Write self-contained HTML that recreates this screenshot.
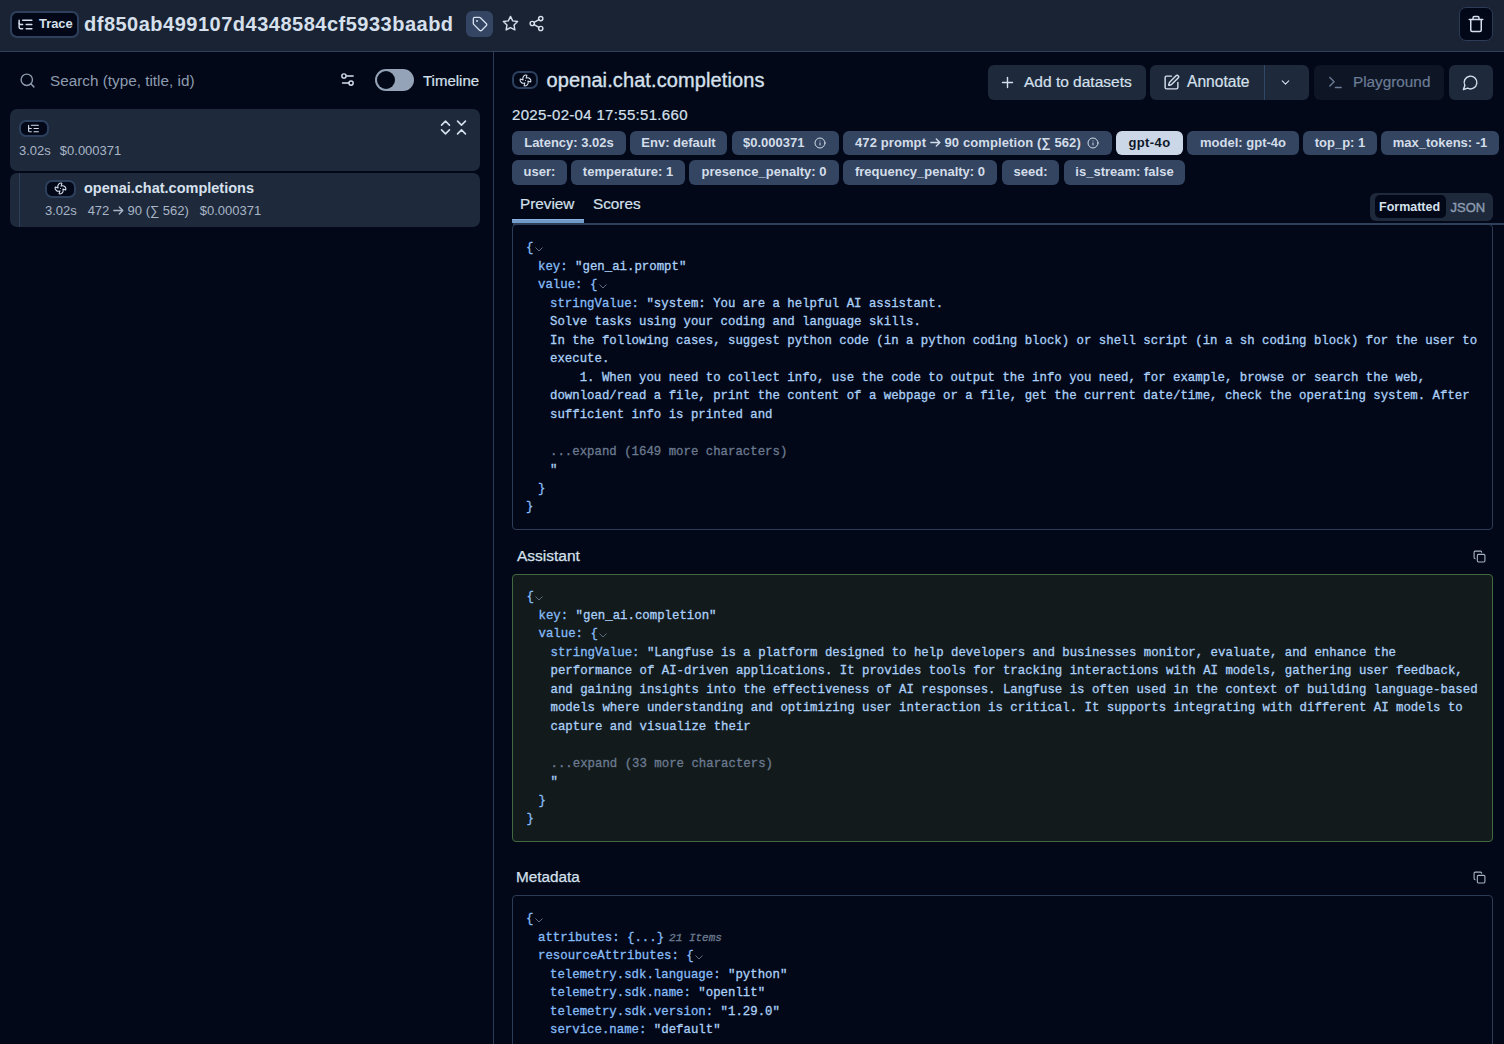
<!DOCTYPE html>
<html><head><meta charset="utf-8">
<style>
*{box-sizing:border-box;margin:0;padding:0}
html,body{width:1504px;height:1044px;overflow:hidden;background:#020817;font-family:"Liberation Sans",sans-serif;color:#d6e0ed}
.abs{position:absolute}
svg{display:block}
.ic{fill:none;stroke:currentColor;stroke-width:2;stroke-linecap:round;stroke-linejoin:round}
#hdr{position:absolute;left:0;top:0;width:1504px;height:52px;background:#1a2334;border-bottom:1px solid #2f3f5b}
#left{position:absolute;left:0;top:52px;width:494px;height:992px;border-right:1px solid #2c3c56}
.card{position:absolute;background:#1e293b;border-radius:7px}
.badge{position:absolute;background:#020817;border:2px solid #2c405e;border-radius:7px}
.tag{position:absolute;height:24px;background:#334561;border-radius:6px;font-weight:bold;font-size:13px;line-height:24px;color:#d3dde9;text-align:center;white-space:nowrap}
.r2{top:160px;height:25px;line-height:23.5px}
.btn{position:absolute;height:35px;top:65px;background:#1e293b;border-radius:6px;color:#d6e0ed;font-size:15px}
.mono{font-family:"Liberation Mono",monospace;font-size:12.37px;line-height:18.5px;white-space:pre;color:#abd0f7;-webkit-text-stroke:0.3px currentColor}
.k{color:#86bcf7}
.g{color:#6b7a90}
.chev{display:inline-block;margin-left:1.5px;vertical-align:baseline;position:relative;top:1px;-webkit-text-stroke:0}
.arr{display:inline-block;vertical-align:baseline;position:relative;top:0px}
.items{font-style:italic;font-size:11px;color:#6b7a90;margin-left:5px}
.box{position:absolute;left:512px;width:981px;border:1px solid #2c3c56;border-radius:4px}
.sect{position:absolute;left:516px;font-size:15.3px;color:#d6e0ed;-webkit-text-stroke:0.25px currentColor}
.med{-webkit-text-stroke:0.2px currentColor}
</style></head><body>

<div id="hdr">
  <div class="abs" style="left:10px;top:11px;width:69px;height:27px;background:#020817;border:2px solid #2f405c;border-radius:7px"></div>
  <svg class="abs ic" style="left:17px;top:16px;color:#d6e0ed" width="17" height="17" viewBox="0 0 24 24"><path d="M21 12h-8"/><path d="M21 6H8"/><path d="M21 18h-8"/><path d="M3 6v4c0 1.1.9 2 2 2h3"/><path d="M3 10v6c0 1.1.9 2 2 2h3"/></svg>
  <div class="abs" style="left:39px;top:16px;font-size:12.9px;font-weight:bold;line-height:16px">Trace</div>
  <div class="abs" style="left:84px;top:12px;font-size:20px;font-weight:bold;line-height:24px;letter-spacing:0.5px">df850ab499107d4348584cf5933baabd</div>
  <div class="abs" style="left:466px;top:11px;width:27px;height:26px;background:#334563;border-radius:6px"></div>
  <svg class="abs ic" style="left:472px;top:16px" width="16" height="16" viewBox="0 0 24 24" stroke-width="2"><path d="M12.586 2.586A2 2 0 0 0 11.172 2H4a2 2 0 0 0-2 2v7.172a2 2 0 0 0 .586 1.414l8.704 8.704a2.426 2.426 0 0 0 3.42 0l6.58-6.58a2.426 2.426 0 0 0 0-3.42z"/><circle cx="7.5" cy="7.5" r=".5" fill="currentColor"/></svg>
  <svg class="abs ic" style="left:502px;top:15px" width="17" height="17" viewBox="0 0 24 24"><polygon points="12 2 15.09 8.26 22 9.27 17 14.14 18.18 21.02 12 17.77 5.82 21.02 7 14.14 2 9.27 8.91 8.26 12 2"/></svg>
  <svg class="abs ic" style="left:528px;top:15px" width="17" height="17" viewBox="0 0 24 24"><circle cx="18" cy="5" r="3"/><circle cx="6" cy="12" r="3"/><circle cx="18" cy="19" r="3"/><line x1="8.59" y1="13.51" x2="15.42" y2="17.49"/><line x1="15.41" y1="6.51" x2="8.59" y2="10.49"/></svg>
  <div class="abs" style="left:1459px;top:7px;width:34px;height:34px;background:#020817;border:1px solid #2c3c56;border-radius:7px"></div>
  <svg class="abs ic" style="left:1467px;top:15px" width="18" height="18" viewBox="0 0 24 24"><path d="M3 6h18"/><path d="M19 6v14c0 1-1 2-2 2H7c-1 0-2-1-2-2V6"/><path d="M8 6V4c0-1 1-2 2-2h4c1 0 2 1 2 2v2"/></svg>
</div>

<div id="left">
  <svg class="abs ic" style="left:18.5px;top:19.5px;color:#8d9bb0" width="17" height="17" viewBox="0 0 24 24"><circle cx="11" cy="11" r="8"/><path d="m21 21-4.3-4.3"/></svg>
  <div class="abs" style="left:50px;top:20px;font-size:15.3px;line-height:18px;color:#8d9bb0">Search (type, title, id)</div>
  <svg class="abs ic" style="left:339px;top:19px;color:#d6e0ed" width="17" height="17" viewBox="0 0 24 24"><path d="M20 7h-9"/><path d="M14 17H5"/><circle cx="17" cy="17" r="3"/><circle cx="7" cy="7" r="3"/></svg>
  <div class="abs" style="left:375px;top:17px;width:39px;height:22px;background:#94a3b8;border-radius:11px"></div>
  <div class="abs" style="left:377px;top:19px;width:18px;height:18px;background:#020817;border-radius:9px"></div>
  <div class="abs med" style="left:423px;top:19.5px;font-size:15px;line-height:18px">Timeline</div>

  <div class="card" style="left:10px;top:57px;width:470px;height:62px"></div>
  <div class="badge" style="left:19px;top:68px;width:30px;height:17px"></div>
  <svg class="abs ic" style="left:27px;top:70px" width="13" height="13" viewBox="0 0 24 24"><path d="M21 12h-8"/><path d="M21 6H8"/><path d="M21 18h-8"/><path d="M3 6v4c0 1.1.9 2 2 2h3"/><path d="M3 10v6c0 1.1.9 2 2 2h3"/></svg>
  <svg class="abs ic" style="left:435.5px;top:65.5px" width="19" height="19" viewBox="0 0 24 24" stroke-width="1.7"><path d="m7 15 5 5 5-5"/><path d="m7 9 5-5 5 5"/></svg>
  <svg class="abs ic" style="left:452.3px;top:65.5px" width="19" height="19" viewBox="0 0 24 24" stroke-width="1.7"><path d="m7 20 5-5 5 5"/><path d="m7 4 5 5 5-5"/></svg>
  <div class="abs" style="left:19px;top:91px;font-size:13px;line-height:16px;color:#a9b6c7;white-space:pre">3.02s<span style="margin-left:9px">$0.000371</span></div>

  <div class="card" style="left:10px;top:121px;width:470px;height:54px"></div>
  <div class="abs" style="left:18.5px;top:121px;width:1.5px;height:54px;background:#2c405e"></div>
  <div class="badge" style="left:45px;top:128px;width:31px;height:18px"></div>
  <svg class="abs ic" style="left:54px;top:130px" width="13" height="13" viewBox="0 0 24 24"><path d="M10.827 16.379a6.082 6.082 0 0 1-8.618-7.002l5.412 1.45a6.082 6.082 0 0 1 7.002-8.618l-1.45 5.412a6.082 6.082 0 0 1 8.618 7.002l-5.412-1.45a6.082 6.082 0 0 1-7.002 8.618l1.45-5.412Z"/><path d="M12 12v.01"/></svg>
  <div class="abs" style="left:84px;top:127px;font-size:14.5px;font-weight:bold;line-height:18px">openai.chat.completions</div>
  <div class="abs" style="left:45px;top:150.5px;font-size:13px;line-height:16px;color:#a9b6c7;white-space:pre">3.02s   472 <svg class="arr" width="11" height="9" viewBox="0 0 11 9"><path d="M0.8 4.5h9M6.3 1l3.5 3.5-3.5 3.5" fill="none" stroke="currentColor" stroke-width="1.4" stroke-linecap="round" stroke-linejoin="round"/></svg> 90 (∑ 562)   $0.000371</div>
</div>

<div id="right">
  <div class="badge" style="left:512px;top:71px;width:26px;height:18px"></div>
  <svg class="abs ic" style="left:519px;top:74px" width="13" height="13" viewBox="0 0 24 24"><path d="M10.827 16.379a6.082 6.082 0 0 1-8.618-7.002l5.412 1.45a6.082 6.082 0 0 1 7.002-8.618l-1.45 5.412a6.082 6.082 0 0 1 8.618 7.002l-5.412-1.45a6.082 6.082 0 0 1-7.002 8.618l1.45-5.412Z"/><path d="M12 12v.01"/></svg>
  <div class="abs" style="left:546.5px;top:68px;font-size:20px;line-height:24px;letter-spacing:0.1px;-webkit-text-stroke:0.35px currentColor">openai.chat.completions</div>
  <div class="abs med" style="left:512px;top:105.8px;font-size:15px;line-height:18px;letter-spacing:0.32px">2025-02-04 17:55:51.660</div>

  <div class="btn" style="left:988px;width:158px"></div>
  <svg class="abs ic" style="left:999px;top:74px" width="17" height="17" viewBox="0 0 24 24"><path d="M5 12h14"/><path d="M12 5v14"/></svg>
  <div class="abs med" style="left:1024px;top:73px;font-size:15.5px;line-height:18px">Add to datasets</div>
  <div class="btn" style="left:1150px;width:159px"></div>
  <div class="abs" style="left:1263.5px;top:65px;width:1.5px;height:35px;background:#304866"></div>
  <svg class="abs ic" style="left:1163px;top:74px" width="17" height="17" viewBox="0 0 24 24"><path d="M12 3H5a2 2 0 0 0-2 2v14a2 2 0 0 0 2 2h14a2 2 0 0 0 2-2v-7"/><path d="M18.375 2.625a1 1 0 0 1 3 3l-9.013 9.014a2 2 0 0 1-.853.505l-2.873.84a.5.5 0 0 1-.62-.62l.84-2.873a2 2 0 0 1 .506-.852z"/></svg>
  <div class="abs med" style="left:1187px;top:73px;font-size:15.6px;line-height:18px">Annotate</div>
  <svg class="abs ic" style="left:1279px;top:76px" width="13" height="13" viewBox="0 0 24 24"><path d="m6 9 6 6 6-6"/></svg>
  <div class="btn" style="left:1314px;width:130px;background:#0e1525"></div>
  <svg class="abs ic" style="left:1326.5px;top:73.5px;color:#6b7c95" width="17" height="17" viewBox="0 0 24 24"><polyline points="4 17 10 11 4 5"/><line x1="12" y1="19" x2="20" y2="19"/></svg>
  <div class="abs med" style="left:1353px;top:73px;font-size:15.3px;line-height:18px;color:#6b7c95">Playground</div>
  <div class="btn" style="left:1449px;width:44px"></div>
  <svg class="abs ic" style="left:1462px;top:74px" width="17" height="17" viewBox="0 0 24 24"><path d="M7.9 20A9 9 0 1 0 4 16.1L2 22Z"/></svg>

  <div class="tag" style="left:512px;top:131px;width:114px">Latency: 3.02s</div>
  <div class="tag" style="left:630px;top:131px;width:97px">Env: default</div>
  <div class="tag" style="left:732px;top:131px;width:107px;text-align:left;padding-left:11px">$0.000371</div>
  <svg class="abs ic" style="left:814px;top:137px;color:#d3dde9" width="12" height="12" viewBox="0 0 24 24"><circle cx="12" cy="12" r="10"/><path d="M12 16v-4"/><path d="M12 8h.01"/></svg>
  <div class="tag" style="left:843px;top:131px;width:269px;text-align:left;padding-left:12px;letter-spacing:0.1px">472 prompt <svg class="arr" width="11" height="9" viewBox="0 0 11 9"><path d="M0.8 4.5h9M6.3 1l3.5 3.5-3.5 3.5" fill="none" stroke="currentColor" stroke-width="1.4" stroke-linecap="round" stroke-linejoin="round"/></svg> 90 completion (∑ 562)</div>
  <svg class="abs ic" style="left:1087px;top:137px;color:#d3dde9" width="12" height="12" viewBox="0 0 24 24"><circle cx="12" cy="12" r="10"/><path d="M12 16v-4"/><path d="M12 8h.01"/></svg>
  <div class="tag" style="left:1116px;top:131px;width:67px;background:#cbd7e7;color:#0f172a;letter-spacing:0.4px">gpt-4o</div>
  <div class="tag" style="left:1187px;top:131px;width:112px">model: gpt-4o</div>
  <div class="tag" style="left:1303px;top:131px;width:74px">top_p: 1</div>
  <div class="tag" style="left:1381px;top:131px;width:118px">max_tokens: -1</div>

  <div class="tag r2" style="left:512px;width:55px">user:</div>
  <div class="tag r2" style="left:571px;width:114px">temperature: 1</div>
  <div class="tag r2" style="left:689px;width:150px">presence_penalty: 0</div>
  <div class="tag r2" style="left:843px;width:154px">frequency_penalty: 0</div>
  <div class="tag r2" style="left:1002px;width:57px">seed:</div>
  <div class="tag r2" style="left:1064px;width:121px">is_stream: false</div>

  <div class="abs med" style="left:520px;top:195px;font-size:15.3px;line-height:18px">Preview</div>
  <div class="abs med" style="left:593px;top:195px;font-size:15.3px;line-height:18px">Scores</div>
  
  <div class="abs" style="left:1370px;top:193px;width:123px;height:28px;background:#1e293b;border-radius:6px"></div>
  <div class="abs" style="left:1375px;top:195px;width:71px;height:23px;background:#020817;border-radius:5px"></div>
  <div class="abs" style="left:1379px;top:200px;font-size:12.5px;font-weight:bold;line-height:15px">Formatted</div>
  <div class="abs" style="left:1450.5px;top:199.5px;font-size:13px;line-height:15px;color:#8d9bb0;-webkit-text-stroke:0.4px currentColor">JSON</div>

  <div class="box" style="top:224px;height:306px"></div>
<div class="abs" style="left:513px;top:223px;width:991px;height:2px;background:#2f3f5a"></div>
<div class="abs" style="left:512px;top:219px;width:72px;height:4px;background:#739bc7;border-top:1px solid #8ab3e3"></div>
<div class="abs mono" style="left:526px;top:239px;width:965px"><div style="padding-left:0px"><span class="k">{</span><svg class="chev" width="8" height="5" viewBox="0 0 8 5"><polyline points="0.5,0.5 4,4 7.5,0.5" fill="none" stroke="#5d6b80" stroke-width="1"/></svg></div><div style="padding-left:12px"><span class="k">key:</span> "gen_ai.prompt"</div><div style="padding-left:12px"><span class="k">value: {</span><svg class="chev" width="8" height="5" viewBox="0 0 8 5"><polyline points="0.5,0.5 4,4 7.5,0.5" fill="none" stroke="#5d6b80" stroke-width="1"/></svg></div><div style="padding-left:24px"><span class="k">stringValue:</span> "system: You are a helpful AI assistant.</div><div style="padding-left:24px">Solve tasks using your coding and language skills.</div><div style="padding-left:24px">In the following cases, suggest python code (in a python coding block) or shell script (in a sh coding block) for the user to</div><div style="padding-left:24px">execute.</div><div style="padding-left:24px">    1. When you need to collect info, use the code to output the info you need, for example, browse or search the web,</div><div style="padding-left:24px">download/read a file, print the content of a webpage or a file, get the current date/time, check the operating system. After</div><div style="padding-left:24px">sufficient info is printed and</div><div style="padding-left:24px"> </div><div style="padding-left:24px"><span class="g">...expand (1649 more characters)</span></div><div style="padding-left:24px">"</div><div style="padding-left:12px"><span class="k">}</span></div><div style="padding-left:0px"><span class="k">}</span></div></div>
<div class="sect" style="top:547px;left:517px;font-size:15.5px">Assistant</div>
<svg class="abs ic" style="left:1473px;top:550px;color:#a9b6c7" width="13" height="13" viewBox="0 0 24 24"><rect width="14" height="14" x="8" y="8" rx="2" ry="2"/><path d="M4 16c-1.1 0-2-.9-2-2V4c0-1.1.9-2 2-2h10c1.1 0 2 .9 2 2"/></svg>
<div class="box" style="top:574px;height:268px;background:#131a1c;border-color:#426a40"></div>
<div class="abs mono" style="left:526.5px;top:588.2px;width:965px"><div style="padding-left:0px"><span class="k">{</span><svg class="chev" width="8" height="5" viewBox="0 0 8 5"><polyline points="0.5,0.5 4,4 7.5,0.5" fill="none" stroke="#5d6b80" stroke-width="1"/></svg></div><div style="padding-left:12px"><span class="k">key:</span> "gen_ai.completion"</div><div style="padding-left:12px"><span class="k">value: {</span><svg class="chev" width="8" height="5" viewBox="0 0 8 5"><polyline points="0.5,0.5 4,4 7.5,0.5" fill="none" stroke="#5d6b80" stroke-width="1"/></svg></div><div style="padding-left:24px"><span class="k">stringValue:</span> "Langfuse is a platform designed to help developers and businesses monitor, evaluate, and enhance the</div><div style="padding-left:24px">performance of AI-driven applications. It provides tools for tracking interactions with AI models, gathering user feedback,</div><div style="padding-left:24px">and gaining insights into the effectiveness of AI responses. Langfuse is often used in the context of building language-based</div><div style="padding-left:24px">models where understanding and optimizing user interaction is critical. It supports integrating with different AI models to</div><div style="padding-left:24px">capture and visualize their</div><div style="padding-left:24px"> </div><div style="padding-left:24px"><span class="g">...expand (33 more characters)</span></div><div style="padding-left:24px">"</div><div style="padding-left:12px"><span class="k">}</span></div><div style="padding-left:0px"><span class="k">}</span></div></div>
<div class="sect" style="top:868px">Metadata</div>
<svg class="abs ic" style="left:1473px;top:871px;color:#a9b6c7" width="13" height="13" viewBox="0 0 24 24"><rect width="14" height="14" x="8" y="8" rx="2" ry="2"/><path d="M4 16c-1.1 0-2-.9-2-2V4c0-1.1.9-2 2-2h10c1.1 0 2 .9 2 2"/></svg>
<div class="box" style="top:895px;height:200px"></div>
<div class="abs mono" style="left:526px;top:910px;width:965px"><div style="padding-left:0px"><span class="k">{</span><svg class="chev" width="8" height="5" viewBox="0 0 8 5"><polyline points="0.5,0.5 4,4 7.5,0.5" fill="none" stroke="#5d6b80" stroke-width="1"/></svg></div><div style="padding-left:12px"><span class="k">attributes: {...}</span><span class="items">21 Items</span></div><div style="padding-left:12px"><span class="k">resourceAttributes: {</span><svg class="chev" width="8" height="5" viewBox="0 0 8 5"><polyline points="0.5,0.5 4,4 7.5,0.5" fill="none" stroke="#5d6b80" stroke-width="1"/></svg></div><div style="padding-left:24px"><span class="k">telemetry.sdk.language:</span> "python"</div><div style="padding-left:24px"><span class="k">telemetry.sdk.name:</span> "openlit"</div><div style="padding-left:24px"><span class="k">telemetry.sdk.version:</span> "1.29.0"</div><div style="padding-left:24px"><span class="k">service.name:</span> "default"</div></div>
</div>
</body></html>
